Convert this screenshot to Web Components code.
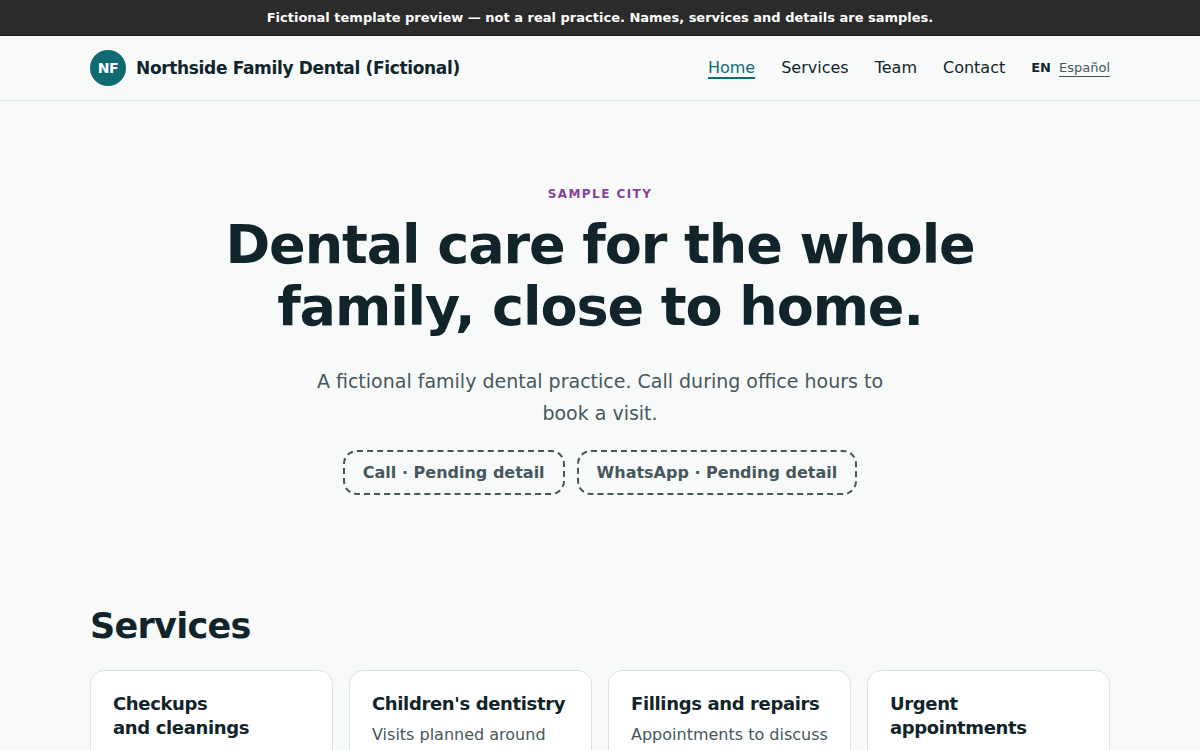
<!DOCTYPE html>
<html lang="en">
<head>
<meta charset="utf-8">
<meta name="viewport" content="width=device-width, initial-scale=1">
<title>Northside Family Dental (Fictional)</title>
<style>
  :root {
    --bg: #f8faf9;
    --surface: #ffffff;
    --ink: #10242a;
    --muted: #46575c;
    --brand: #0f6a73;
    --accent: #84429b;
    --line: #dce3e3;
    --notice: #2b2b2b;
    --page: 1020px;
    --tight: -0.02em;
  }
  body {
    margin: 0;
    background: var(--bg);
    color: var(--ink);
    font: 16px/26px "DejaVu Sans", Verdana, sans-serif;
  }
</style>
</head>
<body>
<preview-notice>Fictional template preview — not a real practice. Names, services and details are samples.</preview-notice>

<site-header>
  <brand-mark slot="brand" initials="NF">Northside Family Dental (Fictional)</brand-mark>
  <nav-link href="#home" current>Home</nav-link>
  <nav-link href="#services">Services</nav-link>
  <nav-link href="#team">Team</nav-link>
  <nav-link href="#contact">Contact</nav-link>
  <language-switch slot="language" current="EN" href="#es" lang-code="es">Español</language-switch>
</site-header>

<main>
  <hero-section id="home">
    <span slot="eyebrow">Sample City</span>
    <span slot="title">Dental care for the whole family, close to home.</span>
    <span slot="lead">A fictional family dental practice. Call during office hours to book a visit.</span>
    <pending-action>Call · Pending detail</pending-action>
    <pending-action>WhatsApp · Pending detail</pending-action>
  </hero-section>

  <card-section id="services">
    <span slot="title">Services</span>
    <service-card><span slot="title">Checkups<br>and cleanings</span></service-card>
    <service-card><span slot="title">Children's dentistry</span>Visits planned around</service-card>
    <service-card><span slot="title">Fillings and repairs</span>Appointments to discuss</service-card>
    <service-card><span slot="title">Urgent appointments</span></service-card>
  </card-section>
</main>

<script>
(function () {
'use strict';

class BaseElement extends HTMLElement {
    constructor() {
        super();
        let template = document.createElement('template');
        template.innerHTML = this.constructor.markup;
        this.attachShadow({ mode: 'open' }).appendChild(template.content);
    }
}

class PreviewNotice extends BaseElement {
    static get markup() {
        return `<style>
    :host{
      display: block;
      padding: 7px 16px 6px;
      border-bottom: 1px solid #1a1a1a;
      background: var(--notice);
      color: #fff;
      font-size: 13px;
      font-weight: 700;
      line-height: 22px;
      text-align: center;
    }
  </style>
  <slot></slot>`;
    }
}

class SiteHeader extends BaseElement {
    static get markup() {
        return `<style>
    :host{
      display: block;
      border-bottom: 1px solid var(--line);
    }
    header{
      display: flex;
      flex-wrap: wrap;
      align-items: center;
      justify-content: space-between;
      gap: 12px 24px;
      max-width: var(--page);
      margin: 0 auto;
      padding: 14px 24px;
    }
    .menu, nav{
      display: flex;
      flex-wrap: wrap;
      align-items: center;
      gap: 8px 26px;
    }
  </style>
  <header>
    <slot name="brand"></slot>
    <div class="menu">
      <nav aria-label="Main"><slot></slot></nav>
      <slot name="language"></slot>
    </div>
  </header>`;
    }
}

class BrandMark extends BaseElement {
    static get markup() {
        return `<style>
    :host{
      display: block;
    }
    a{
      display: flex;
      align-items: center;
      gap: 10px;
      color: inherit;
      font-size: 17px;
      font-weight: 700;
      letter-spacing: var(--tight);
      text-decoration: none;
    }
    .badge{
      display: grid;
      place-items: center;
      width: 36px;
      height: 36px;
      border-radius: 50%;
      background: var(--brand);
      color: #fff;
      font-size: 14px;
    }
  </style>
  <a href="#home"><span class="badge" aria-hidden="true"></span><slot></slot></a>`;
    }
    connectedCallback() {
        this.shadowRoot.querySelector('.badge').textContent = this.getAttribute('initials');
    }
}

class NavLink extends BaseElement {
    static get markup() {
        return `<style>
    :host{
      display: block;
    }
    a{
      color: var(--ink);
      text-decoration: none;
    }
    a:hover, :host([current]) a{
      color: var(--brand);
      border-bottom: 2px solid;
    }
  </style>
  <a><slot></slot></a>`;
    }
    connectedCallback() {
        let link = this.shadowRoot.querySelector('a');
        link.href = this.getAttribute('href');
        if (this.hasAttribute('current')) {
            link.setAttribute('aria-current', 'page');
        }
    }
}

class LanguageSwitch extends BaseElement {
    static get markup() {
        return `<style>
    :host{
      display: flex;
      align-items: center;
      gap: 8px;
      font-size: 13px;
    }
    a{
      color: var(--muted);
      text-decoration: none;
      border-bottom: 1px solid;
      line-height: 16px;
    }
  </style>
  <strong></strong><a><slot></slot></a>`;
    }
    connectedCallback() {
        let link = this.shadowRoot.querySelector('a');
        link.href = this.getAttribute('href');
        link.hreflang = this.getAttribute('lang-code');
        this.shadowRoot.querySelector('strong').textContent = this.getAttribute('current');
    }
}

class HeroSection extends BaseElement {
    static get markup() {
        return `<style>
    :host{
      display: block;
      max-width: 800px;
      margin: 0 auto;
      padding: 80px 24px;
      text-align: center;
    }
    .eyebrow{
      margin: 0 0 7px;
      color: var(--accent);
      font-size: 12px;
      font-weight: 700;
      letter-spacing: 0.12em;
      text-transform: uppercase;
    }
    h1{
      margin: 0 0 27px;
      font-size: 54px;
      line-height: 62px;
      letter-spacing: var(--tight);
    }
    .lead{
      max-width: 600px;
      margin: 0 auto 21px;
      color: var(--muted);
      font-size: 19px;
      line-height: 32px;
    }
    .actions{
      display: flex;
      flex-wrap: wrap;
      justify-content: center;
      gap: 12px;
    }
  </style>
  <p class="eyebrow"><slot name="eyebrow"></slot></p>
  <h1><slot name="title"></slot></h1>
  <p class="lead"><slot name="lead"></slot></p>
  <div class="actions"><slot></slot></div>`;
    }
}

class PendingAction extends BaseElement {
    static get markup() {
        return `<style>
    :host{
      display: block;
    }
    button{
      display: block;
      padding: 8px 18px;
      border: 2px dashed currentColor;
      border-radius: 14px;
      background: none;
      color: var(--muted);
      font: inherit;
      font-weight: 700;
      line-height: 25px;
      cursor: not-allowed;
    }
  </style>
  <button type="button" aria-disabled="true"><slot></slot></button>`;
    }
}

class CardSection extends BaseElement {
    static get markup() {
        return `<style>
    :host{
      display: block;
      max-width: var(--page);
      margin: 0 auto;
      padding: 31px 24px;
    }
    h2{
      margin: 0 0 24px;
      font-size: 35px;
      line-height: 40px;
      letter-spacing: var(--tight);
    }
    .cards{
      display: grid;
      grid-template-columns: repeat(auto-fit, minmax(220px, 1fr));
      gap: 16px;
    }
  </style>
  <h2><slot name="title"></slot></h2>
  <div class="cards"><slot></slot></div>`;
    }
}

class ServiceCard extends BaseElement {
    static get markup() {
        return `<style>
    :host{
      display: block;
      padding: 21px 22px;
      border: 1px solid var(--line);
      border-radius: 14px;
      background: var(--surface);
    }
    h3{
      margin: 0 0 6px;
      font-size: 18px;
      line-height: 24px;
      letter-spacing: var(--tight);
    }
    p{
      margin: 0;
      min-height: 52px;
      color: var(--muted);
    }
  </style>
  <h3><slot name="title"></slot></h3>
  <p><slot></slot></p>`;
    }
}

window.customElements.define('preview-notice', PreviewNotice);
window.customElements.define('site-header', SiteHeader);
window.customElements.define('brand-mark', BrandMark);
window.customElements.define('nav-link', NavLink);
window.customElements.define('language-switch', LanguageSwitch);
window.customElements.define('hero-section', HeroSection);
window.customElements.define('pending-action', PendingAction);
window.customElements.define('card-section', CardSection);
window.customElements.define('service-card', ServiceCard);

}());
</script>
</body>
</html>
